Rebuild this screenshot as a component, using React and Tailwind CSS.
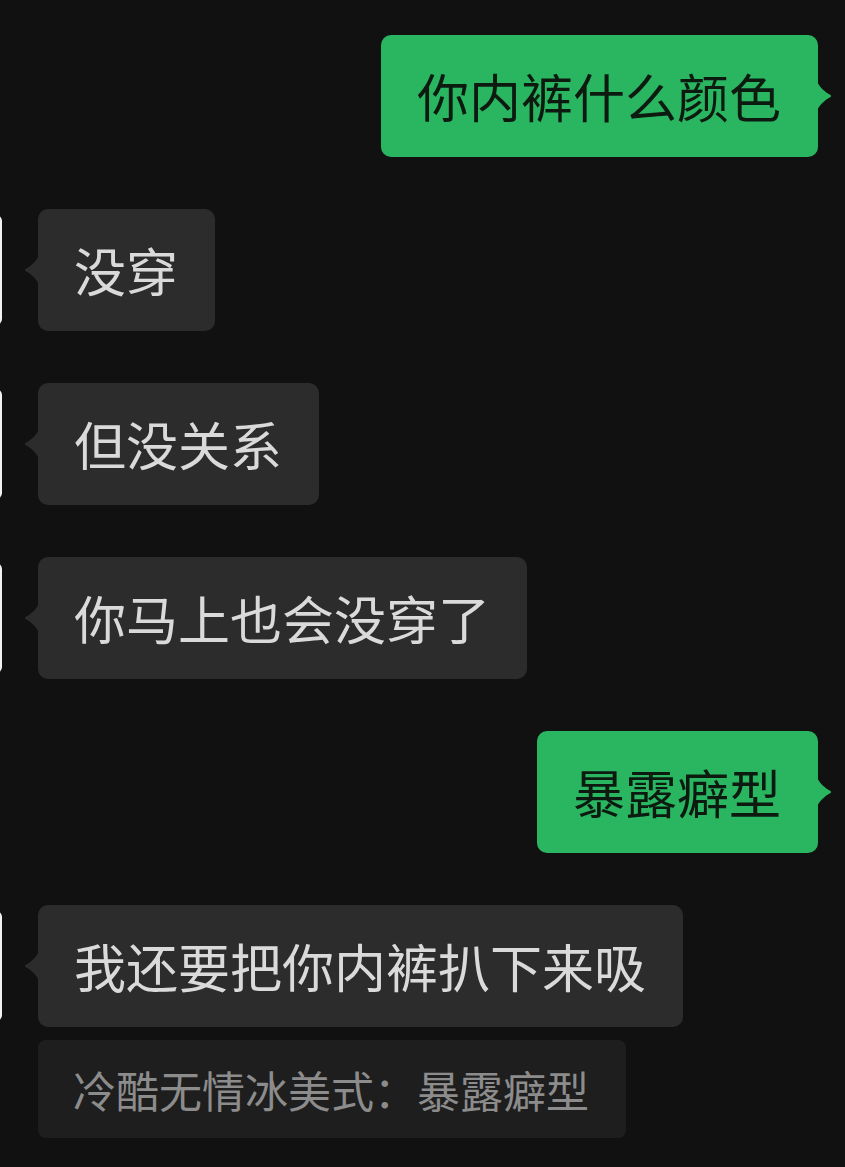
const FONT = { fontFamily: '"Noto Sans CJK SC", "Noto Sans", sans-serif' };

const messages = [
  { id: 1, side: "right", text: "你内裤什么颜色" },
  { id: 2, side: "left", text: "没穿" },
  { id: 3, side: "left", text: "但没关系" },
  { id: 4, side: "left", text: "你马上也会没穿了" },
  { id: 5, side: "right", text: "暴露癖型" },
  {
    id: 6,
    side: "left",
    text: "我还要把你内裤扒下来吸",
    quote: "冷酷无情冰美式：暴露癖型",
  },
];

const Tail = ({ side, color }) => (
  <svg
    width="15"
    height="30"
    viewBox="0 0 15 30"
    className={
      side === "right"
        ? "absolute top-1/2 -translate-y-1/2 -right-[14px]"
        : "absolute top-1/2 -translate-y-1/2 -left-[14px]"
    }
  >
    {side === "right" ? (
      <path d="M0 0 C2 6 8 11 13.5 14 Q15 15 13.5 16 C8 19 2 24 0 30 Z" fill={color} />
    ) : (
      <path d="M15 0 C13 6 7 11 1.5 14 Q0 15 1.5 16 C7 19 13 24 15 30 Z" fill={color} />
    )}
  </svg>
);

const Bubble = ({ side, text }) => {
  const green = side === "right";
  return (
    <div
      className={`relative rounded-[10px] pl-[36px] pr-[37px] py-[26px] text-[52px] leading-[70px] whitespace-nowrap ${
        green ? "bg-[#2ab561] text-[#0c1a10]" : "bg-[#2c2c2c] text-[#dadada]"
      }`}
    >
      {text}
      <Tail side={side} color={green ? "#2ab561" : "#2c2c2c"} />
    </div>
  );
};

export default function App() {
  return (
    <div className="min-h-screen w-full bg-[#111111] overflow-hidden" style={FONT}>
      <div className="flex flex-col gap-[52px] pt-[35px] pb-[29px]">
        {messages.map((m) =>
          m.side === "right" ? (
            <div key={m.id} className="flex justify-end pr-[27px]">
              <Bubble side="right" text={m.text} />
            </div>
          ) : (
            <div key={m.id} className="flex flex-col gap-[13px]">
              <div className="flex items-start">
                <div className="w-[110px] h-[110px] -ml-[108px] mt-[6px] rounded-[6px] bg-[#f2f2f2] shrink-0" />
                <div className="ml-[36px]">
                  <Bubble side="left" text={m.text} />
                </div>
              </div>
              {m.quote && (
                <div className="ml-[38px] self-start rounded-[8px] bg-[#1e1e1e] pl-[35px] pr-[37px] py-[20px] text-[43px] leading-[58px] text-[#8c8c8c] whitespace-nowrap">
                  {m.quote}
                </div>
              )}
            </div>
          )
        )}
      </div>
    </div>
  );
}
